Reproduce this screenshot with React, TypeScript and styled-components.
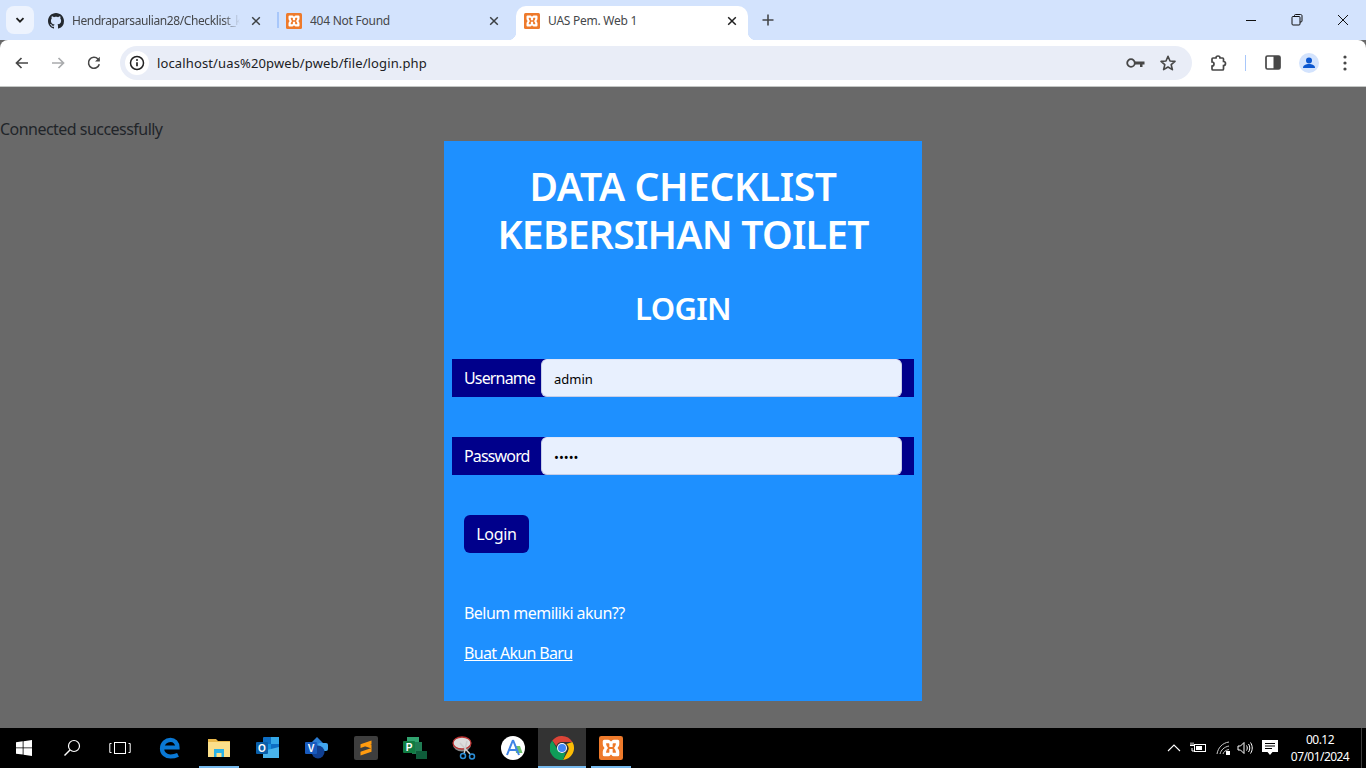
import React from "react";
import styled, { createGlobalStyle } from "styled-components";

const Global = createGlobalStyle`
  html, body { margin: 0; padding: 0; height: 100%; overflow: hidden; }
  #root { height: 100%; }
  * { box-sizing: border-box; }
`;
const FONT = `"Noto Sans", "Open Sans", "Liberation Sans", sans-serif`;

const Screen = styled.div`
  width: 1366px; height: 768px; display: flex; flex-direction: column;
  font-family: ${FONT}; background: #696969;
`;
const TabStrip = styled.div`
  height: 40px; flex: none; background: #d3e3fd; display: flex; align-items: flex-end; position: relative;
`;
const TabSearch = styled.div`
  width: 28px; height: 28px; margin: 0 6px 6px 6px; flex: none; border-radius: 8px; background: #edf3fe;
  display: flex; align-items: center; justify-content: center;
`;
const Tab = styled.div<{ $w: number; $active?: boolean; $sep?: boolean }>`
  width: ${p => p.$w}px; flex: none; height: 34px; display: flex; align-items: center;
  padding: 0 ${p => p.$active ? 8 : 14}px 4px 8px; gap: 8px; position: relative;
  background: ${p => p.$active ? "#fff" : "transparent"};
  border-radius: 10px 10px 0 0;
  ${p => p.$active ? `
    &::before, &::after { content: ""; position: absolute; bottom: 0; width: 8px; height: 8px; }
    &::before { left: -8px; background: radial-gradient(circle at 0 0, #d3e3fd 8px, #fff 8.5px); }
    &::after { right: -8px; background: radial-gradient(circle at 100% 0, #d3e3fd 8px, #fff 8.5px); }
  ` : ""}
  ${p => p.$sep ? `
    &::after { content: ""; position: absolute; right: -1px; top: 6px; width: 2px; height: 16px; background: #a8c7fa; }
  ` : ""}
`;
const TabTitle = styled.span<{ $fade?: boolean }>`
  flex: 1; min-width: 0; font-size: 12px; line-height: 16px; color: #45474a; white-space: nowrap; overflow: hidden;
  letter-spacing: ${p => p.$fade ? -0.4 : -0.25}px;
  ${p => p.$fade ? `-webkit-mask-image: linear-gradient(90deg, #000 90%, transparent 100%); mask-image: linear-gradient(90deg, #000 90%, transparent 100%);` : ""}
`;
const NewTab = styled.div`
  width: 28px; height: 28px; margin: 0 0 6px 6px; display: flex; align-items: center; justify-content: center;
`;
const WinControls = styled.div`
  margin-left: auto; height: 40px; display: flex; align-self: flex-start;
`;
const WinBtn = styled.div`
  width: 46px; height: 40px; display: flex; align-items: center; justify-content: center;
`;
const Toolbar = styled.div`
  height: 47px; flex: none; background: #fff; display: flex; align-items: center; padding: 0 0 1px 4px;
  border-bottom: 1px solid #c4c7c5; border-radius: 8px 8px 0 0; position: relative;
`;
const NavBtn = styled.div`
  width: 36px; height: 36px; flex: none; display: flex; align-items: center; justify-content: center;
`;
const Omnibox = styled.div`
  width: 1072px; height: 34px; margin-left: 8px; flex: none; border-radius: 17px; background: #e9edf7;
  display: flex; align-items: center; padding: 0 8px 0 5px;
`;
const InfoChip = styled.div`
  width: 24px; height: 24px; flex: none; border-radius: 50%; background: #fff;
  display: flex; align-items: center; justify-content: center;
`;
const Url = styled.span`
  margin-left: 8px; flex: 1; font-size: 13px; color: #202124; white-space: nowrap; letter-spacing: 0.13px;
`;
const OmniIcon = styled.div`
  width: 32px; height: 28px; flex: none; display: flex; align-items: center; justify-content: center;
`;
const ToolRight = styled.div`
  display: flex; align-items: center; margin-left: 8px;
`;
const ToolIcon = styled.div<{ $w?: number }>`
  width: ${p => p.$w ?? 36}px; height: 36px; flex: none; display: flex; align-items: center; justify-content: center;
`;
const Divider = styled.div`
  width: 1px; height: 16px; background: #a8c7fa; margin: 0 9px; flex: none;
`;
const Page = styled.main`
  flex: 1; min-height: 0; background: #696969; display: flex; flex-direction: column; padding-top: 32px;
`;
const Status = styled.p`
  margin: 0; font-size: 16px; line-height: 21px; color: #212529; height: 22px; letter-spacing: -0.53px;
`;
const Card = styled.section`
  width: 478px; height: 560px; margin: 0 auto; background: #1e90ff; padding: 21px 8px 0; color: #fff;
  display: flex; flex-direction: column;
`;
const Title = styled.h1`
  margin: 0; font-size: 39px; line-height: 48px; font-weight: 600; text-align: center;
`;
const TitleLine = styled.span<{ $spacing: number }>`
  display: block; letter-spacing: ${p => p.$spacing}px;
`;
const Sub = styled.h2`
  margin: 29px 0 0; font-size: 31px; line-height: 42px; font-weight: 600; text-align: center; letter-spacing: -0.7px;
`;
const Row = styled.div<{ $top: number }>`
  height: 38px; margin-top: ${p => p.$top}px; background: #00008b; display: flex; align-items: center; padding: 0 12px;
`;
const Label = styled.label`
  width: 77px; flex: none; font-size: 16px; color: #fff; letter-spacing: -0.85px;
`;
const Input = styled.input`
  width: 361px; height: 38px; flex: none; border-radius: 6px; border: 1px solid #c5cde8; border-top-color: #dfe6fa; background: #e8f0fe;
  padding: 2px 12px 0; font: 13px ${FONT}; color: #000; outline: none;
`;
const LoginBtn = styled.button`
  width: 65px; height: 38px; margin: 40px 0 0 12px; border: 0; border-radius: 6px; background: #00008b; color: #fff;
  font: 16px ${FONT}; letter-spacing: -0.3px; padding: 0;
`;
const Note = styled.p`
  margin: 49px 0 0 12px; font-size: 16px; line-height: 22px; letter-spacing: -0.54px;
`;
const Link = styled.a`
  margin: 18px 0 0 12px; font-size: 16px; line-height: 22px; color: #fff; text-decoration: underline; align-self: flex-start; letter-spacing: -0.66px;
`;
const Taskbar = styled.footer`
  height: 40px; flex: none; background: #000; display: flex; align-items: stretch; position: relative;
`;
const TaskSlot = styled.div<{ $active?: boolean; $open?: boolean }>`
  width: 48px; flex: none; display: flex; align-items: center; justify-content: center; position: relative;
  background: ${p => p.$active ? "#333" : "transparent"};
  ${p => p.$open ? `&::after { content: ""; position: absolute; left: ${p.$active ? 0 : 4}px; right: ${p.$active ? 0 : 4}px; bottom: 0; height: 2px; background: #76b9ed; }` : ""}
`;
const AppGroup = styled.div`
  display: flex; gap: 1px; margin-left: 2px;
`;
const Tray = styled.div`
  margin-left: auto; display: flex; align-items: center; height: 100%;
`;
const TrayIcon = styled.div<{ $w: number }>`
  width: ${p => p.$w}px; height: 100%; flex: none; display: flex; align-items: center; justify-content: center;
`;
const Clock = styled.div`
  width: 74px; margin-right: 4px; flex: none; text-align: center; color: #fff; font-family: ${FONT}; font-size: 12px; line-height: 17px; letter-spacing: -0.55px; white-space: nowrap;
  display: flex; flex-direction: column; justify-content: center;
`;
const ShowDesktop = styled.div`
  width: 5px; height: 100%; flex: none; border-left: 1px solid #3c3c3c;
`;

const Xampp = ({ s = 16 }: { s?: number }) => (
  <svg width={s} height={s} viewBox="0 0 16 16">
    <rect width="16" height="16" rx="1.5" fill="#ee7a2b" />
    <path d="M3.500 2.500h2.700q1 0 1.500 1h.6q.5-1 1.500-1h2.700q1 0 1 1v2q0 1.500-1.200 2.500q1.200 1 1.200 2.500v2q0 1-1 1H9.800q-1 0-1.500-1h-.6q-.5 1-1.500 1H3.500q-1 0-1-1v-2q0-1.500 1.200-2.500q-1.200-1-1.200-2.500v-2q0-1 1-1z" fill="#fff" />
    <path d="M5 4.800H6.400Q6.900 4.800 6.900 5.400V7.300H9.100V5.400Q9.100 4.800 9.600 4.800H11Q11.400 4.800 11.300 5.400Q11 6.900 10 8Q11 9.100 11.300 10.600Q11.400 11.200 11 11.200H9.600Q9.100 11.200 9.100 10.600V8.700H6.900V10.600Q6.900 11.200 6.400 11.200H5Q4.600 11.200 4.700 10.600Q5 9.100 6 8Q5 6.900 4.700 5.400Q4.600 4.800 5 4.800z" fill="#ee7a2b" />
  </svg>
);
const Close = ({ c = "#3c4043" }: { c?: string }) => (
  <svg width="16" height="16" viewBox="0 0 16 16"><path d="M4.200 4.200l7.600 7.600M11.800 4.200l-7.600 7.600" stroke={c} strokeWidth="1.500" /></svg>
);
const Github = () => (
  <svg width="16" height="16" viewBox="0 0 16 16" fill="#24292f"><path d="M8 0C3.58 0 0 3.58 0 8c0 3.54 2.29 6.53 5.47 7.59.4.07.55-.17.55-.38 0-.19-.01-.82-.01-1.49-2.01.37-2.53-.49-2.69-.94-.09-.23-.48-.94-.82-1.13-.28-.15-.68-.52-.01-.53.63-.01 1.08.58 1.23.82.72 1.21 1.87.87 2.33.66.07-.52.28-.87.51-1.07-1.78-.2-3.64-.89-3.64-3.95 0-.87.31-1.59.82-2.15-.08-.2-.36-1.02.08-2.12 0 0 .67-.21 2.2.82.64-.18 1.32-.27 2-.27s1.36.09 2 .27c1.53-1.04 2.2-.82 2.2-.82.44 1.1.16 1.92.08 2.12.51.56.82 1.27.82 2.15 0 3.07-1.87 3.75-3.65 3.95.29.25.54.73.54 1.48 0 1.07-.01 1.93-.01 2.2 0 .21.15.46.55.38A8.01 8.01 0 0016 8c0-4.42-3.58-8-8-8z"/></svg>
);

export default function App() {
  return (
    <Screen>
      <Global />
      <TabStrip>
        <TabSearch>
          <svg width="12" height="12" viewBox="0 0 12 12"><path d="M2.500 4.200L6 7.700l3.500-3.500" fill="none" stroke="#1f1f1f" strokeWidth="1.800" /></svg>
        </TabSearch>
        <Tab $w={238} $sep>
          <Github />
          <TabTitle $fade>Hendraparsaulian28/Checklist_k</TabTitle>
          <Close />
        </Tab>
        <Tab $w={238}>
          <Xampp />
          <TabTitle>404 Not Found</TabTitle>
          <Close />
        </Tab>
        <Tab $w={232} $active>
          <Xampp />
          <TabTitle>UAS Pem. Web 1</TabTitle>
          <Close c="#1f1f1f" />
        </Tab>
        <NewTab>
          <svg width="16" height="16" viewBox="0 0 16 16"><path d="M8 2.500v11M2.500 8h11" stroke="#45474a" strokeWidth="1.600" /></svg>
        </NewTab>
        <WinControls>
          <WinBtn><svg width="12" height="12" viewBox="0 0 12 12"><path d="M1 6.500h10" stroke="#111" /></svg></WinBtn>
          <WinBtn><svg width="12" height="12" viewBox="0 0 12 12"><path d="M3.500 2.500V1.500c0-.5.3-1 1-1h5c1 0 1.500.5 1.500 1.500v5c0 .7-.5 1-1 1h-1" fill="none" stroke="#111" /><rect x="1" y="2.500" width="8" height="8.500" rx="1" fill="none" stroke="#111" /></svg></WinBtn>
          <WinBtn><svg width="12" height="12" viewBox="0 0 12 12"><path d="M1 1l10 10M11 1L1 11" stroke="#111" /></svg></WinBtn>
        </WinControls>
      </TabStrip>
      <Toolbar>
        <NavBtn><svg width="16" height="16" viewBox="0 0 16 16"><path d="M14 8H3M7.500 3L2.500 8l5 5" fill="none" stroke="#474747" strokeWidth="1.700" /></svg></NavBtn>
        <NavBtn><svg width="16" height="16" viewBox="0 0 16 16"><path d="M2 8h11M8.500 3l5 5-5 5" fill="none" stroke="#a9abad" strokeWidth="1.700" /></svg></NavBtn>
        <NavBtn><svg width="16" height="16" viewBox="0 0 16 16"><path d="M13.300 9.300A5.500 5.500 0 1 1 12 4l1.300 1.500" fill="none" stroke="#474747" strokeWidth="1.600" /><path d="M13.800 1.800v4.700H9.100z" fill="#474747" /></svg></NavBtn>
        <Omnibox>
          <InfoChip>
            <svg width="16" height="16" viewBox="0 0 16 16"><circle cx="8" cy="8" r="6.500" fill="none" stroke="#222" strokeWidth="1.500" /><path d="M8 7.200v4" stroke="#222" strokeWidth="1.700" /><circle cx="8" cy="5" r="1" fill="#222" /></svg>
          </InfoChip>
          <Url>localhost/uas%20pweb/pweb/file/login.php</Url>
          <OmniIcon>
            <svg width="20" height="12" viewBox="0 0 20 12"><circle cx="5" cy="6" r="3.800" fill="none" stroke="#474747" strokeWidth="1.800" /><path d="M9 4.500h9.500v3H16.500v2.500H14V7.500H9z" fill="#474747" /></svg>
          </OmniIcon>
          <OmniIcon>
            <svg width="18" height="18" viewBox="0 0 18 18"><path d="M9 2.300l2 4.700 5 .4-3.800 3.300 1.200 4.900L9 13l-4.400 2.600 1.200-4.900L2 7.400 7 7z" fill="none" stroke="#474747" strokeWidth="1.600" strokeLinejoin="round" /></svg>
          </OmniIcon>
        </Omnibox>
        <ToolRight>
          <ToolIcon>
            <svg width="18" height="18" viewBox="0 0 18 18"><path d="M4 4h3a2 2 0 0 1 4 0h2.500c.5 0 1 .5 1 1v2.500a2 2 0 0 1 0 4V15c0 .5-.5 1-1 1H4c-.5 0-1-.5-1-1v-3a2 2 0 0 0 0-4V5c0-.5.5-1 1-1z" fill="none" stroke="#474747" strokeWidth="1.700" /></svg>
          </ToolIcon>
          <Divider />
          <ToolIcon>
            <svg width="16" height="15" viewBox="0 0 16 15"><rect x="1" y="1" width="14" height="13" rx="1.500" fill="none" stroke="#474747" strokeWidth="1.700" /><rect x="8.500" y="1" width="6.500" height="13" fill="#474747" /></svg>
          </ToolIcon>
          <ToolIcon>
            <svg width="20" height="20" viewBox="0 0 20 20"><circle cx="10" cy="10" r="10" fill="#d3e3fd" /><circle cx="10" cy="7.500" r="3" fill="#0b57d0" /><path d="M4 15c0-3 3-4 6-4s6 1 6 4z" fill="#0b57d0" /></svg>
          </ToolIcon>
          <ToolIcon>
            <svg width="4" height="16" viewBox="0 0 4 16" fill="#474747"><circle cx="2" cy="2" r="1.600" /><circle cx="2" cy="8" r="1.600" /><circle cx="2" cy="14" r="1.600" /></svg>
          </ToolIcon>
        </ToolRight>
      </Toolbar>
      <Page>
        <Status>Connected successfully</Status>
        <Card>
          <Title>
            <TitleLine $spacing={-0.4}>DATA CHECKLIST</TitleLine>
            <TitleLine $spacing={-0.75}>KEBERSIHAN TOILET</TitleLine>
          </Title>
          <Sub>LOGIN</Sub>
          <Row $top={30}>
            <Label>Username</Label>
            <Input type="text" defaultValue="admin" readOnly />
          </Row>
          <Row $top={40}>
            <Label>Password</Label>
            <Input type="password" defaultValue="admin" readOnly />
          </Row>
          <LoginBtn>Login</LoginBtn>
          <Note>Belum memiliki akun??</Note>
          <Link href="#">Buat Akun Baru</Link>
        </Card>
      </Page>
      <Taskbar>
        <TaskSlot>
          <svg width="16" height="16" viewBox="0 0 16 16" fill="#fff"><path d="M0 2.300l6.700-1V7.500H0zM7.500 1.200L16 0v7.500H7.500zM0 8.300h6.700v6.300L0 13.700zM7.500 8.300H16V16l-8.500-1.200z" /></svg>
        </TaskSlot>
        <TaskSlot>
          <svg width="18" height="18" viewBox="0 0 18 18"><circle cx="11" cy="7" r="5.500" fill="none" stroke="#fff" strokeWidth="1.200" /><path d="M7 11l-5.500 5.500" stroke="#fff" strokeWidth="1.400" /></svg>
        </TaskSlot>
        <TaskSlot>
          <svg width="22" height="14" viewBox="0 0 22 14" fill="none" stroke="#fff"><rect x="5.500" y="1.500" width="11" height="11" /><path d="M2.500 2.500H.8v9h1.700M19.500 2.500h1.700v9h-1.700" /></svg>
        </TaskSlot>
        <AppGroup>
          <TaskSlot>
            <svg width="22" height="22" viewBox="0 0 22 22"><path d="M4 10.500H18.500C18.500 6 15.500 2.800 11.500 2.800C7 2.800 3 6.500 3 11.500C3 16.500 7 19.500 11.500 19.500C14 19.500 16.500 19 19 17.800" fill="none" stroke="#0a78d4" strokeWidth="4.200" /></svg>
          </TaskSlot>
          <TaskSlot $open>
            <svg width="22" height="20" viewBox="0 0 22 20"><path d="M0 1h8l2 2h12v4H0z" fill="#e9b84a" /><rect y="4" width="22" height="15" fill="#fbdf8a" /><path d="M6 11h10v8h-2.500v-4h-5v4H6z" fill="#29b2e8" /></svg>
          </TaskSlot>
          <TaskSlot>
            <svg width="24" height="22" viewBox="0 0 24 22"><rect x="7" y="0" width="16" height="21" rx="1" fill="#0d6ec4" /><rect x="15" y="0" width="8" height="7" fill="#35a8e8" /><rect x="7" y="7" width="8" height="7" fill="#1490df" /><path d="M7 14l16-4v11H7z" fill="#49b4ec" /><rect x="0" y="5" width="12" height="12" rx="1" fill="#0a5ea8" /><text x="6" y="14.500" fontSize="10" fontWeight="700" fill="#fff" textAnchor="middle" fontFamily="Liberation Sans, sans-serif">O</text></svg>
          </TaskSlot>
          <TaskSlot>
            <svg width="24" height="22" viewBox="0 0 24 22"><path d="M12 0l7 7-7 7-7-7z" fill="#2b7cd3" /><rect x="13" y="6" width="10" height="8" rx="2" fill="#41a5ee" /><circle cx="13" cy="15" r="6.500" fill="#103f91" /><rect x="0" y="5" width="12" height="12" rx="1" fill="#185abd" /><text x="6" y="14.500" fontSize="10" fontWeight="700" fill="#fff" textAnchor="middle" fontFamily="Liberation Sans, sans-serif">V</text></svg>
          </TaskSlot>
          <TaskSlot>
            <svg width="24" height="24" viewBox="0 0 24 24"><rect width="24" height="24" rx="2" fill="#3e3e3e" /><path d="M17.500 4.500v3.800L6.500 12v-3.800zM17.500 8.700v3.800L6.500 8.700v-.2zM17.500 12v3.800L6.500 19.500v-3.800z" fill="#ff9b0f" /></svg>
          </TaskSlot>
          <TaskSlot>
            <svg width="24" height="24" viewBox="0 0 24 24"><rect x="4" y="1" width="12" height="11" fill="#31a36f" /><rect x="9" y="6" width="10" height="12" fill="#1f7c53" /><rect x="13" y="15" width="11" height="8" fill="#0e5c3a" /><rect x="0" y="5" width="12" height="12" rx="1" fill="#107c41" /><text x="6" y="14.500" fontSize="10" fontWeight="700" fill="#fff" textAnchor="middle" fontFamily="Liberation Sans, sans-serif">P</text></svg>
          </TaskSlot>
          <TaskSlot>
            <svg width="24" height="24" viewBox="0 0 24 24"><ellipse cx="10" cy="9" rx="9" ry="6.500" fill="#8a8a8a" /><ellipse cx="10" cy="7" rx="9" ry="6" fill="#ddd" stroke="#b33" strokeWidth="1.300" /><path d="M8 7l10 11M15 5L12 18" stroke="#ccc" strokeWidth="1.500" /><circle cx="11" cy="20" r="2.500" fill="none" stroke="#2c8fd8" strokeWidth="1.500" /><circle cx="20" cy="20.500" r="2.500" fill="none" stroke="#2c8fd8" strokeWidth="1.500" /></svg>
          </TaskSlot>
          <TaskSlot>
            <svg width="24" height="24" viewBox="0 0 24 24"><circle cx="12" cy="12" r="12" fill="#fff" /><path d="M14 10h5l2.500 7H15z" fill="#6fc36b" /><path d="M12 4L6 19M12 4l6 15M8 14h8" fill="none" stroke="#3f83e6" strokeWidth="2" /></svg>
          </TaskSlot>
          <TaskSlot $active $open>
            <svg width="24" height="24" viewBox="0 0 24 24"><path d="M12 0a12 12 0 0 1 10.400 6H12a6 6 0 0 0-5.700 4.100L2.300 4.600A12 12 0 0 1 12 0z" fill="#db4437" /><path d="M22.400 6A12 12 0 0 1 13 24l4.800-8.600A6 6 0 0 0 16.500 8z" fill="#fbbc05" /><path d="M13 24A12 12 0 0 1 2.300 4.600l5 8.600a6 6 0 0 0 8.500 3.100z" fill="#0f9d58" /><circle cx="12" cy="12" r="5" fill="#fff" /><circle cx="12" cy="12" r="4" fill="#4285f4" /></svg>
          </TaskSlot>
          <TaskSlot $open>
            <Xampp s={24} />
          </TaskSlot>
        </AppGroup>
        <Tray>
          <TrayIcon $w={14}><svg width="14" height="8" viewBox="0 0 14 8"><path d="M1 7l6-6 6 6" fill="none" stroke="#fff" strokeWidth="1.100" /></svg></TrayIcon>
          <TrayIcon $w={34}><svg width="18" height="12" viewBox="0 0 18 12" fill="none" stroke="#fff"><rect x="5.500" y="2.500" width="11" height="7" /><rect x="7" y="4" width="6" height="4" fill="#fff" stroke="none" /><path d="M1 3.500h4M2 .5v3M4 .5v3M3 6v3h2" /></svg></TrayIcon>
          <TrayIcon $w={18}><svg width="16" height="14" viewBox="0 0 16 14" fill="none" stroke="#ccc"><path d="M1 13C2 7 6 2 13 1M4 13c1-4 4-7 9-8M7 13c.5-2 2.500-4 6-4.500" /><rect x="10" y="10" width="4" height="4" fill="#fff" stroke="none" /></svg></TrayIcon>
          <TrayIcon $w={24}><svg width="16" height="14" viewBox="0 0 16 14" fill="none" stroke="#fff"><path d="M1 5h2.500L7 1.500v11L3.500 9H1zM9.500 4.500c1 1.500 1 3.500 0 5M11.500 3c1.700 2.300 1.700 5.700 0 8M13.500 1.500c2.300 3.300 2.300 7.700 0 11" /></svg></TrayIcon>
          <TrayIcon $w={26}><svg width="16" height="18" viewBox="0 0 16 18"><path d="M0 1h16v12H10.500L8 16l-2.500-3H0z" fill="#fff" /><path d="M3 4.500h10M3 7h10M3 9.500h7" stroke="#000" /></svg></TrayIcon>
          <Clock><span>00.12</span><span>07/01/2024</span></Clock>
          <ShowDesktop />
        </Tray>
      </Taskbar>
    </Screen>
  );
}
